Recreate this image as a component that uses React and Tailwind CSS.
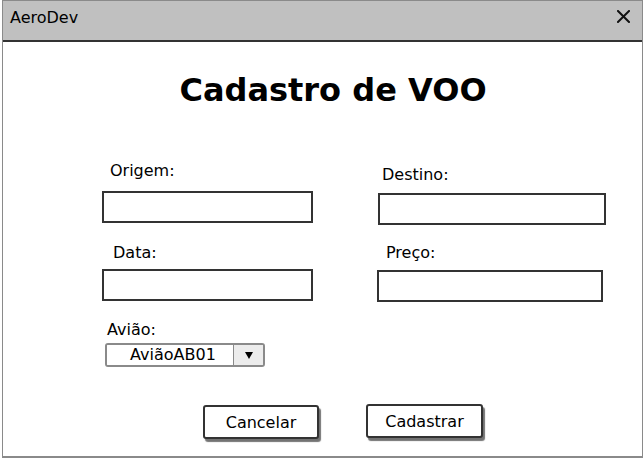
import React from "react";

const font = { fontFamily: '"DejaVu Sans", sans-serif' };

const Field = ({ label, labelClass, inputClass }) => (
  <>
    <div className={`text-[16px] leading-[19px] text-black ${labelClass}`}>{label}</div>
    <div className={`h-[32px] border-2 border-[#333] bg-white ${inputClass}`} />
  </>
);

const App = () => {
  return (
    <div className="w-[644px] h-[459px] bg-white" style={font}>
      {/* window */}
      <div className="ml-[2px] w-[641px] h-[458px] border-x border-t border-b-2 border-[#8a8a8a] flex flex-col">
        {/* title bar */}
        <div className="h-[41px] bg-[#c0c0c0] border-b-2 border-[#333] flex justify-between px-[7px] pr-[12px]">
          <span className="pt-[7px] text-[16px] leading-[19px] text-black">AeroDev</span>
          <svg className="mt-[9px]" width="13" height="13" viewBox="0 0 13 13">
            <path d="M1 1L12 12M12 1L1 12" stroke="#111" strokeWidth="2" strokeLinecap="square" />
          </svg>
        </div>

        {/* body */}
        <div className="flex flex-col">
          <h1 className="mt-[29px] text-center text-[32px] leading-[38px] font-bold text-black pl-[21px]">
            Cadastro de VOO
          </h1>

          <div className="flex">
            {/* left column */}
            <div className="w-[280px] flex flex-col items-start">
              <Field label="Origem:" labelClass="mt-[52px] ml-[107px]" inputClass="mt-[11px] ml-[99px] w-[211px]" />
              <Field label="Data:" labelClass="mt-[20px] ml-[110px]" inputClass="mt-[7px] ml-[99px] w-[211px]" />
              <div className="mt-[19px] ml-[104px] text-[16px] leading-[19px] text-black">Avião:</div>
              <div className="mt-[4px] ml-[102px] w-[160px] h-[24px] border-2 border-[#8a8a8a] rounded-[3px] flex overflow-hidden">
                <div className="w-[126px] bg-white text-center pl-[6px] text-[16px] leading-[20px] text-black">
                  AviãoAB01
                </div>
                <div className="flex-1 bg-[#ececec] border-l border-[#8a8a8a] flex items-center justify-center pl-[1px]">
                  <svg width="8" height="7" viewBox="0 0 8 7">
                    <path d="M0 0H8L4 7Z" fill="#000" />
                  </svg>
                </div>
              </div>
            </div>

            {/* right column */}
            <div className="flex-1 flex flex-col items-start">
              <Field label="Destino:" labelClass="mt-[56px] ml-[99px]" inputClass="mt-[9px] ml-[95px] w-[228px]" />
              <Field label="Preço:" labelClass="mt-[18px] ml-[103px]" inputClass="mt-[8px] ml-[94px] w-[226px]" />
            </div>
          </div>

          {/* buttons */}
          <div className="flex items-start">
            <button className="mt-[38px] ml-[200px] w-[116px] h-[34px] border-2 border-[#333] rounded-[3px] bg-white text-[16px] leading-[19px] text-black shadow-[2px_3px_1px_rgba(0,0,0,0.55)]">
              Cancelar
            </button>
            <button className="mt-[37px] ml-[47px] w-[117px] h-[34px] border-2 border-[#333] rounded-[3px] bg-white text-[16px] leading-[19px] text-black shadow-[2px_3px_1px_rgba(0,0,0,0.55)]">
              Cadastrar
            </button>
          </div>
        </div>
      </div>
    </div>
  );
};

export default App;
